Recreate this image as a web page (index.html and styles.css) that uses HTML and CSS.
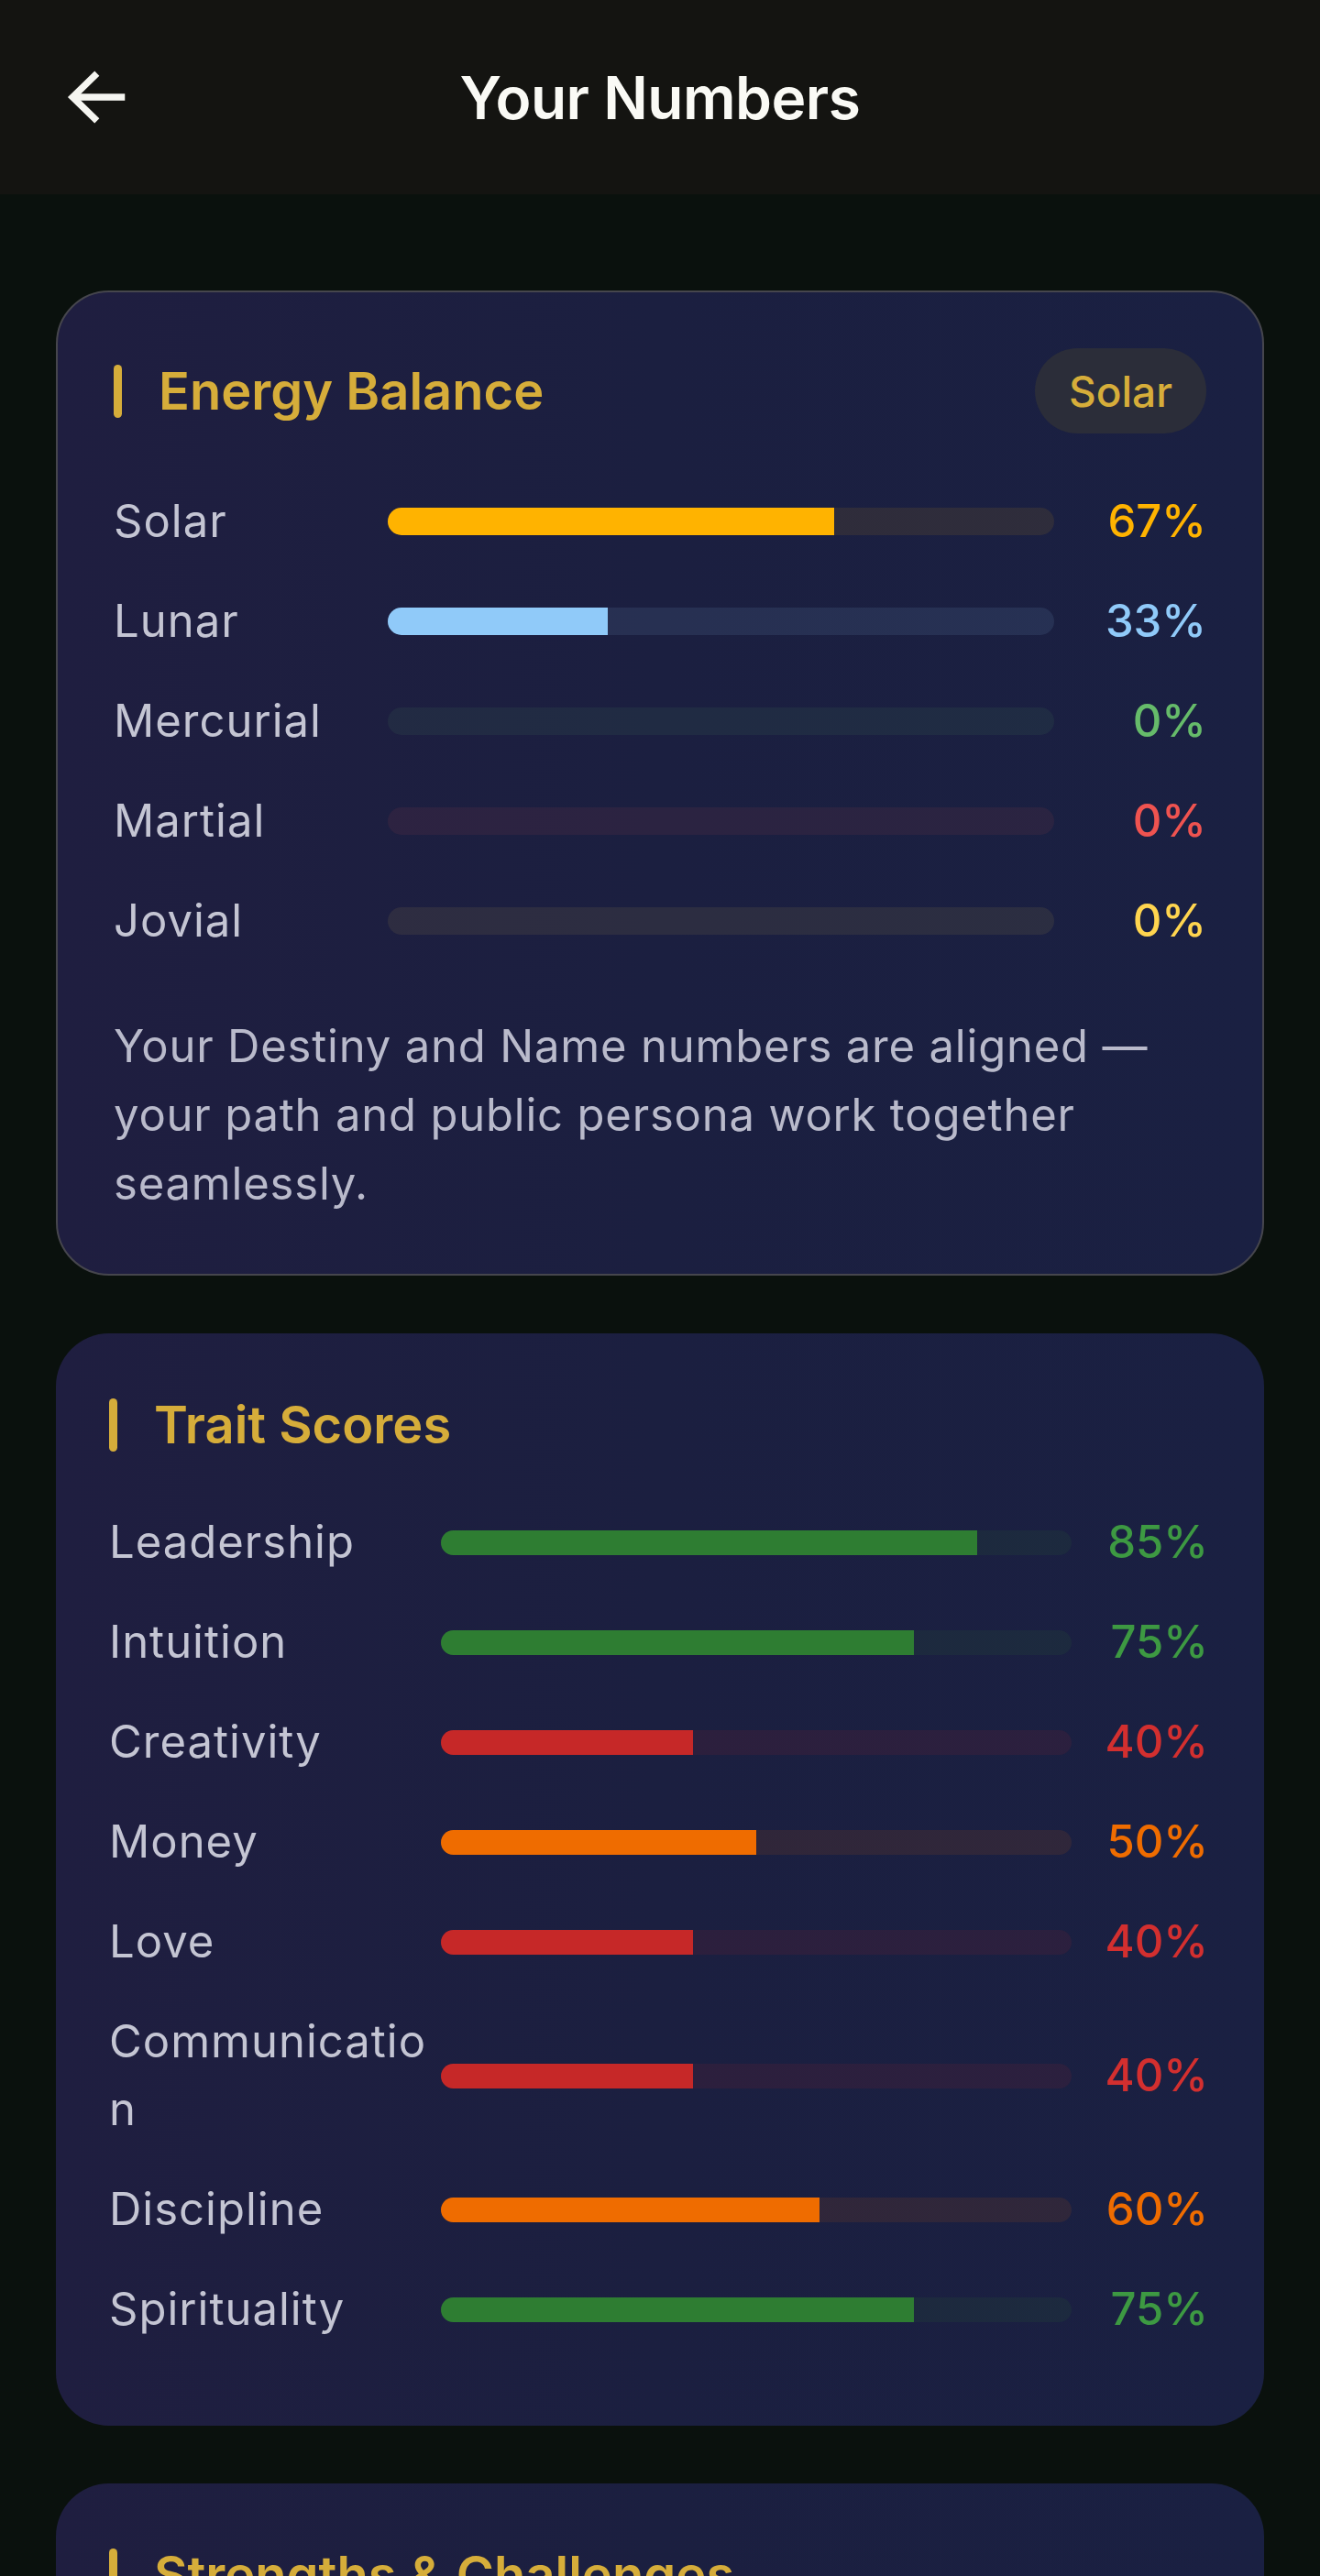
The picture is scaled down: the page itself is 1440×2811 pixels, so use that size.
FILE: index.html
```html
<!DOCTYPE html>
<html lang="en">
<head>
  <meta charset="UTF-8">
  <meta name="viewport" content="width=device-width, initial-scale=1.0">
  <title>Your Numbers</title>
  <link rel="stylesheet" href="styles.css">
</head>
<body>
  <header class="appbar">
    <button class="back" aria-label="Back">
      <svg viewBox="0 0 24 24" width="84" height="84" fill="none" stroke="#f5f5f0" stroke-width="2.1">
        <path d="M21.5 12H5.2"/>
        <path d="M12.8 4.6L5.2 12l7.6 7.4"/>
      </svg>
    </button>
    <h1 class="appbar-title">Your Numbers</h1>
    <div></div>
  </header>

  <main class="content">
    <section class="card outlined">
      <div class="card-head">
        <h2 class="card-title"><span class="accent"></span>Energy Balance</h2>
        <span class="badge">Solar</span>
      </div>

      <div class="rows energy">
        <div class="row">
          <span class="label">Solar</span>
          <div class="track" style="background: rgba(255, 179, 0, 0.09)"><div class="fill" style="width: 67%; background: #ffb300"></div></div>
          <span class="pct" style="color: #ffb300">67%</span>
        </div>
        <div class="row">
          <span class="label">Lunar</span>
          <div class="track" style="background: rgba(144, 202, 249, 0.1)"><div class="fill" style="width: 33%; background: #90caf9"></div></div>
          <span class="pct" style="color: #90caf9">33%</span>
        </div>
        <div class="row">
          <span class="label">Mercurial</span>
          <div class="track" style="background: rgba(102, 187, 106, 0.08)"><div class="fill" style="width: 0%"></div></div>
          <span class="pct" style="color: #66bb6a">0%</span>
        </div>
        <div class="row">
          <span class="label">Martial</span>
          <div class="track" style="background: rgba(239, 83, 80, 0.08)"><div class="fill" style="width: 0%"></div></div>
          <span class="pct" style="color: #ef5350">0%</span>
        </div>
        <div class="row">
          <span class="label">Jovial</span>
          <div class="track" style="background: rgba(255, 213, 79, 0.08)"><div class="fill" style="width: 0%"></div></div>
          <span class="pct" style="color: #ffd54f">0%</span>
        </div>
      </div>

      <p class="note">Your Destiny and Name numbers are aligned — your path and public persona work together seamlessly.</p>
    </section>

    <section class="card">
      <div class="card-head">
        <h2 class="card-title"><span class="accent"></span>Trait Scores</h2>
      </div>

      <div class="rows traits">
        <div class="row">
          <span class="label">Leadership</span>
          <div class="track green"><div class="fill" style="width: 85%"></div></div>
          <span class="pct green">85%</span>
        </div>
        <div class="row">
          <span class="label">Intuition</span>
          <div class="track green"><div class="fill" style="width: 75%"></div></div>
          <span class="pct green">75%</span>
        </div>
        <div class="row">
          <span class="label">Creativity</span>
          <div class="track red"><div class="fill" style="width: 40%"></div></div>
          <span class="pct red">40%</span>
        </div>
        <div class="row">
          <span class="label">Money</span>
          <div class="track orange"><div class="fill" style="width: 50%"></div></div>
          <span class="pct orange">50%</span>
        </div>
        <div class="row">
          <span class="label">Love</span>
          <div class="track red"><div class="fill" style="width: 40%"></div></div>
          <span class="pct red">40%</span>
        </div>
        <div class="row">
          <span class="label">Communication</span>
          <div class="track red"><div class="fill" style="width: 40%"></div></div>
          <span class="pct red">40%</span>
        </div>
        <div class="row">
          <span class="label">Discipline</span>
          <div class="track orange"><div class="fill" style="width: 60%"></div></div>
          <span class="pct orange">60%</span>
        </div>
        <div class="row">
          <span class="label">Spirituality</span>
          <div class="track green"><div class="fill" style="width: 75%"></div></div>
          <span class="pct green">75%</span>
        </div>
      </div>
    </section>

    <section class="card">
      <div class="card-head">
        <h2 class="card-title"><span class="accent"></span>Strengths &amp; Challenges</h2>
      </div>
      <p class="note">Natural leadership and strong intuition are your greatest assets.</p>
    </section>
  </main>
</body>
</html>
```

FILE: styles.css
```css
* {
  margin: 0;
  padding: 0;
  box-sizing: border-box;
}

body {
  font-family: 'Inter', 'Noto Sans', sans-serif;
  background-color: #0a110d;
  color: #c4c5d3;
}

.appbar {
  height: 212px;
  background-color: #141411;
  display: grid;
  grid-template-columns: 1fr auto 1fr;
  align-items: center;
  padding: 0 61px;
}

.back {
  background: none;
  border: none;
  width: 84px;
  height: 84px;
  display: flex;
  cursor: pointer;
}

.appbar-title {
  font-size: 64px;
  font-weight: 600;
  color: #fafaf5;
  letter-spacing: -0.5px;
}

.content {
  padding: 105px 61px 0;
  display: flex;
  flex-direction: column;
  gap: 63px;
}

.card {
  background: linear-gradient(90deg, #1f1e40 0%, #1b1f40 50%, #1a2042 100%);
  border-radius: 58px;
  padding: 61px 61px 55px 58px;
}

.card.outlined {
  border: 2px solid #46464d;
  padding: 61px 61px 26px 61px;
}

.card-head {
  display: flex;
  align-items: center;
  justify-content: space-between;
  margin-bottom: 52px;
}

.outlined .card-head {
  margin-bottom: 59px;
}

.card-title {
  display: flex;
  align-items: center;
  gap: 40px;
  font-size: 56px;
  line-height: 78px;
  font-weight: 600;
  color: #d6ad3a;
}

.accent {
  width: 9px;
  height: 58px;
  border-radius: 5px;
  background-color: #d6ad3a;
}

.badge {
  height: 93px;
  padding: 0 37px;
  border-radius: 47px;
  background-color: #2b2d39;
  color: #d6ad3a;
  font-size: 46px;
  font-weight: 500;
  display: flex;
  align-items: center;
}

.row {
  display: grid;
  align-items: center;
  margin-bottom: 35px;
  font-size: 49px;
  line-height: 74px;
}

.energy .row {
  grid-template-columns: 299px 1fr 166px;
}

.traits .row {
  grid-template-columns: 362px 1fr 149px;
}

.label {
  color: #c4c5d3;
  letter-spacing: 1px;
  overflow-wrap: anywhere;
  padding-right: 8px;
}

.track {
  height: 30px;
  border-radius: 15px;
  overflow: hidden;
}

.traits .track {
  height: 27px;
  border-radius: 14px;
}

.fill {
  height: 100%;
}

.pct {
  text-align: right;
  font-weight: 500;
  letter-spacing: 0;
}

.track.green { background: rgba(46, 125, 50, 0.11); }
.track.red { background: rgba(198, 40, 40, 0.1); }
.track.orange { background: rgba(239, 108, 0, 0.1); }

.green .fill { background: #2e7d32; }
.red .fill { background: #c62828; }
.orange .fill { background: #ef6c00; }

.pct.green { color: #3d9942; }
.pct.red { color: #d32f2f; }
.pct.orange { color: #ef6c00; }

.note {
  font-size: 49px;
  line-height: 75px;
  color: #b9bacb;
  letter-spacing: 0.8px;
  margin-bottom: 35px;
}

.energy + .note {
  margin-top: 62px;
}
```
